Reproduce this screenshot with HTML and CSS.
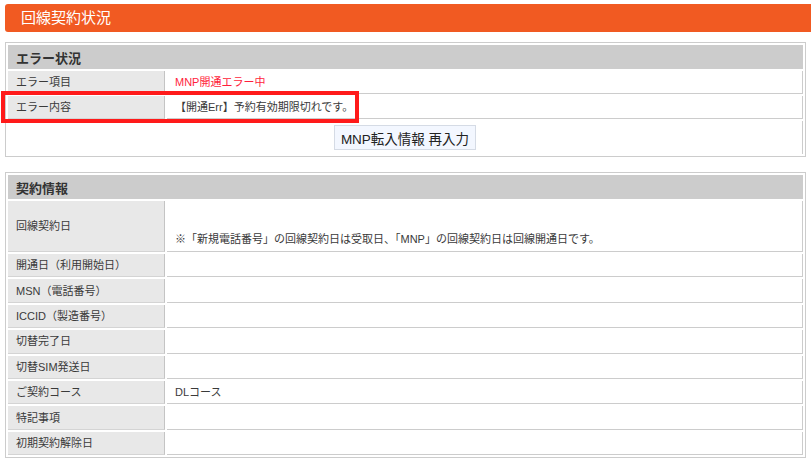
FILE: index.html
```html
<!DOCTYPE html>
<html lang="ja">
<head>
  <meta charset="UTF-8" />
  <meta name="viewport" content="width=device-width, initial-scale=1.0"/>
  <title>回線契約状況</title>
  <link rel="stylesheet" href="styles.css">
</head>
<body>

  <!-- 回線契約状況 -->
  <h1 class="page-title">回線契約状況</h1>

  <!-- エラー状況 -->
  <table class="info-table">
    <colgroup><col class="col-label"><col></colgroup>
    <tr><th colspan="2" class="section-head">エラー状況</th></tr>
    <tr>
      <td class="label">エラー項目</td>
      <td class="value error-text">MNP開通エラー中</td>
    </tr>
    <tr>
      <td class="label">エラー内容</td>
      <td class="value">【開通Err】予約有効期限切れです。</td>
    </tr>
    <tr>
      <td colspan="2" class="action">
        <button class="reentry-btn">MNP転入情報 再入力</button>
      </td>
    </tr>
  </table>

  <!-- 契約情報 -->
  <table class="info-table contract">
    <colgroup><col class="col-label"><col></colgroup>
    <tr><th colspan="2" class="section-head">契約情報</th></tr>
    <tr class="tall">
      <td class="label">回線契約日</td>
      <td class="value note">※「新規電話番号」の回線契約日は受取日、「MNP」の回線契約日は回線開通日です。</td>
    </tr>
    <tr><td class="label">開通日（利用開始日）</td><td class="value"></td></tr>
    <tr><td class="label">MSN（電話番号）</td><td class="value"></td></tr>
    <tr><td class="label">ICCID（製造番号）</td><td class="value"></td></tr>
    <tr><td class="label">切替完了日</td><td class="value"></td></tr>
    <tr><td class="label">切替SIM発送日</td><td class="value"></td></tr>
    <tr><td class="label">ご契約コース</td><td class="value">DLコース</td></tr>
    <tr><td class="label">特記事項</td><td class="value"></td></tr>
    <tr><td class="label">初期契約解除日</td><td class="value"></td></tr>
  </table>

  <!-- 注目枠 -->
  <div class="highlight"></div>

</body>
</html>
```

FILE: styles.css
```css
* {
  margin: 0;
  padding: 0;
  box-sizing: border-box;
}

body {
  position: relative;
  padding: 4px 0 0 5px;
  font-family: 'Liberation Sans', 'Noto Sans CJK JP', sans-serif;
  font-size: 11px;
  color: #3a3a3a;
  background: #fff;
  overflow: hidden;
}

.page-title {
  height: 28px;
  line-height: 28px;
  padding-left: 16px;
  font-size: 15px;
  font-weight: normal;
  color: #fff;
  background: #f15a22;
  border-radius: 3px 0 0 3px;
}

.info-table {
  width: 801px;
  margin-top: 10px;
  table-layout: fixed;
  border: 1px solid #ccc;
  border-collapse: separate;
  border-spacing: 2px;
}

.info-table.contract {
  margin-top: 15px;
}

.col-label {
  width: 157px;
}

.section-head {
  height: 24px;
  padding-left: 8px;
  text-align: left;
  font-size: 13px;
  font-weight: bold;
  color: #333;
  background: #ccc;
}

.info-table td {
  height: 23px;
  line-height: 16px;
  padding: 0 8px;
  vertical-align: middle;
}

.contract td {
  height: 23.4px;
}

.label {
  background: #e8e8e8;
  border-right: 1px solid #c4c4c4;
  border-bottom: 1px solid #d4d4d4;
}

.value {
  border-right: 1px solid #ccc;
  border-bottom: 1px solid #ccc;
}

.error-text {
  color: #ff1e3c;
}

.info-table .tall td {
  height: 51px;
}

.info-table td.note {
  vertical-align: bottom;
  padding-bottom: 4px;
}

.info-table td.action {
  height: 33px;
  text-align: center;
  border-right: 1px solid #ccc;
}

.reentry-btn {
  height: 25px;
  padding: 0 6px;
  font-family: inherit;
  font-size: 13.5px;
  color: #222;
  background: #f3f7ff;
  border: 1px solid #d5dbe5;
  cursor: pointer;
}

.highlight {
  position: absolute;
  left: 1px;
  top: 91px;
  width: 358px;
  height: 32px;
  border: 4px solid #ff1a1a;
}
```
